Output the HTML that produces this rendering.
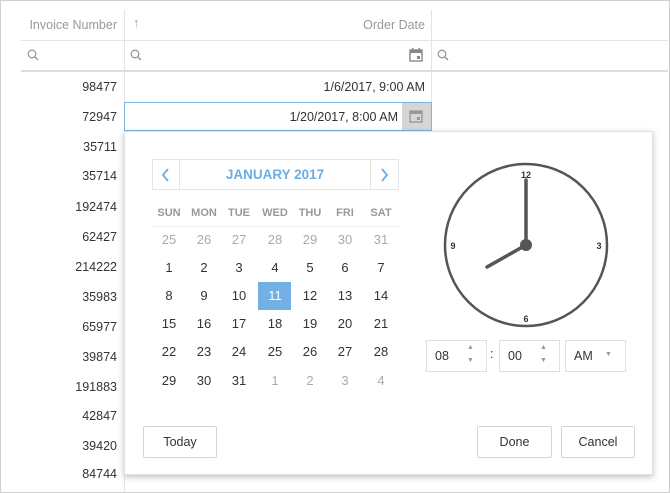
<!DOCTYPE html>
<html><head><style>
*{box-sizing:border-box;margin:0;padding:0}
body{width:670px;height:493px;overflow:hidden;background:#fff;font-family:"Liberation Sans",sans-serif;font-size:12.5px;color:#333;position:relative}
.a{position:absolute}
.frame{left:0;top:0;width:670px;height:493px;border:1px solid #cfcfcf}
.vl{width:1px;background:#e4e4e4}
.hl{height:1px;background:#e4e4e4}
.num{left:21px;width:96px;text-align:right;font-size:12.5px;color:#333}
.hd{color:#999;font-size:12.5px}
.popup{left:124px;top:131px;width:529px;height:344px;background:#fff;box-shadow:0 2px 6px rgba(0,0,0,.25);border:1px solid #e2e2e2}
.d{width:35px;text-align:center;font-size:13px}
.g{color:#aaa}
.btn{border:1px solid #d4d4d4;border-radius:2px;height:32px;line-height:30px;text-align:center;background:#fff;font-size:12.5px;color:#333}
.box{border:1px solid #e0e0e0;height:32px;line-height:30px;padding-left:8px;font-size:12.5px}
</style></head><body>
<div class="a frame"></div>
<div class="a vl" style="left:124px;top:10px;height:482px"></div>
<div class="a vl" style="left:431px;top:10px;height:121px"></div>
<div class="a hl" style="left:21px;top:40px;width:647px"></div>
<div class="a hl" style="left:21px;top:70px;width:647px;background:#ddd;height:2px"></div>
<div class="a hd" style="left:21px;top:18px;width:96px;text-align:right">Invoice Number</div>
<div class="a hd" style="left:133px;top:16px">&#8593;</div>
<div class="a hd" style="left:300px;top:18px;width:125px;text-align:right">Order Date</div>
<svg class="a" style="left:27px;top:49px" width="12" height="12"><circle cx="5" cy="5" r="3.8" fill="none" stroke="#999" stroke-width="1.3"/><line x1="8" y1="8" x2="11" y2="11" stroke="#999" stroke-width="1.5"/></svg>
<svg class="a" style="left:130px;top:49px" width="12" height="12"><circle cx="5" cy="5" r="3.8" fill="none" stroke="#999" stroke-width="1.3"/><line x1="8" y1="8" x2="11" y2="11" stroke="#999" stroke-width="1.5"/></svg>
<svg class="a" style="left:437px;top:49px" width="12" height="12"><circle cx="5" cy="5" r="3.8" fill="none" stroke="#999" stroke-width="1.3"/><line x1="8" y1="8" x2="11" y2="11" stroke="#999" stroke-width="1.5"/></svg>
<svg class="a" style="left:409px;top:48px" width="14" height="14"><rect x="1" y="2" width="12" height="11" fill="none" stroke="#888" stroke-width="1.4"/><rect x="1" y="2" width="12" height="3" fill="#888"/><rect x="3" y="0" width="1.5" height="3" fill="#888"/><rect x="9.5" y="0" width="1.5" height="3" fill="#888"/><rect x="8" y="8" width="3" height="3" fill="#888"/></svg>
<div class="a num" style="top:80px">98477</div>
<div class="a" style="left:300px;top:80px;width:125px;text-align:right">1/6/2017, 9:00 AM</div>
<div class="a" style="left:124px;top:102px;width:308px;height:29px;border:1px solid #7fb5e6"></div>
<div class="a" style="left:402px;top:103px;width:29px;height:27px;background:#d6d6d6"></div>
<svg class="a" style="left:409px;top:109px" width="14" height="14"><rect x="1" y="2" width="12" height="11" fill="none" stroke="#999" stroke-width="1.4"/><rect x="1" y="2" width="12" height="3" fill="#999"/><rect x="8" y="8" width="3" height="3" fill="#999"/></svg>
<div class="a" style="left:260px;top:110px;width:138px;text-align:right">1/20/2017, 8:00 AM</div>
<div class="a num" style="top:110px">72947</div>
<div class="a num" style="top:140px">35711</div>
<div class="a num" style="top:169px">35714</div>
<div class="a num" style="top:200px">192474</div>
<div class="a num" style="top:230px">62427</div>
<div class="a num" style="top:260px">214222</div>
<div class="a num" style="top:290px">35983</div>
<div class="a num" style="top:320px">65977</div>
<div class="a num" style="top:350px">39874</div>
<div class="a num" style="top:380px">191883</div>
<div class="a num" style="top:409px">42847</div>
<div class="a num" style="top:439px">39420</div>
<div class="a num" style="top:467px">84744</div>

<div class="a popup"></div>
<div class="a" style="left:152px;top:159px;width:247px;height:31px;border:1px solid #e4e4e4"></div>
<div class="a vl" style="left:179px;top:159px;height:31px"></div>
<div class="a vl" style="left:370px;top:159px;height:31px"></div>
<svg class="a" style="left:161px;top:168px" width="10" height="14"><path d="M7 1 L2 7 L7 13" fill="none" stroke="#6aaee6" stroke-width="1.8"/></svg>
<svg class="a" style="left:379px;top:168px" width="10" height="14"><path d="M3 1 L8 7 L3 13" fill="none" stroke="#6aaee6" stroke-width="1.8"/></svg>
<div class="a" style="left:180px;top:167px;width:190px;text-align:center;color:#6aaee6;font-weight:bold;font-size:13.5px">JANUARY 2017</div>
<div class="a hl" style="left:152px;top:226px;width:247px;background:#eee"></div>
<div class="a" style="left:258px;top:282px;width:33px;height:28px;background:#72b0e6"></div>
<div id="cal"></div>
<svg class="a" style="left:440px;top:160px" width="172" height="172"><circle cx="86" cy="85" r="81" fill="none" stroke="#555" stroke-width="2.5"/><line x1="86" y1="85" x2="86" y2="20" stroke="#555" stroke-width="3.5" stroke-linecap="round"/><line x1="86" y1="85" x2="47" y2="107" stroke="#555" stroke-width="3.5" stroke-linecap="round"/><circle cx="86" cy="85" r="6" fill="#555"/><text x="86" y="18" font-size="9" font-weight="bold" text-anchor="middle" fill="#333" font-family="Liberation Sans">12</text><text x="159" y="89" font-size="9" font-weight="bold" text-anchor="middle" fill="#333" font-family="Liberation Sans">3</text><text x="86" y="162" font-size="9" font-weight="bold" text-anchor="middle" fill="#333" font-family="Liberation Sans">6</text><text x="13" y="89" font-size="9" font-weight="bold" text-anchor="middle" fill="#333" font-family="Liberation Sans">9</text></svg>
<div class="a box" style="left:426px;top:340px;width:61px">08</div>
<div class="a box" style="left:499px;top:340px;width:61px">00</div>
<div class="a box" style="left:565px;top:340px;width:61px">AM</div>
<div class="a" style="left:490px;top:347px;color:#333">:</div>
<div class="a" style="left:467px;top:344px;font-size:7px;color:#999">&#9650;</div>
<div class="a" style="left:467px;top:357px;font-size:7px;color:#999">&#9660;</div>
<div class="a" style="left:540px;top:344px;font-size:7px;color:#999">&#9650;</div>
<div class="a" style="left:540px;top:357px;font-size:7px;color:#999">&#9660;</div>
<div class="a" style="left:605px;top:351px;font-size:7px;color:#999">&#9660;</div>
<div class="a btn" style="left:143px;top:426px;width:74px">Today</div>
<div class="a btn" style="left:477px;top:426px;width:75px">Done</div>
<div class="a btn" style="left:561px;top:426px;width:74px">Cancel</div>
<script>
var xs=[169,204,239,275,310,345,381],h=["SUN","MON","TUE","WED","THU","FRI","SAT"],s="";
h.forEach(function(t,i){s+='<div class="a d" style="left:'+(xs[i]-17.5)+'px;top:207px;font-size:11px;font-weight:bold;color:#999">'+t+'</div>'});
var days=[25,26,27,28,29,30,31];for(var i=1;i<=31;i++)days.push(i);for(i=1;i<=4;i++)days.push(i);
var ys=[240,268,296,324,352,381];
days.forEach(function(d,k){var r=Math.floor(k/7),c=k%7,g=(r==0||(r==5&&c>2));
s+='<div class="a d'+(g?' g':'')+'" style="left:'+(xs[c]-17.5)+'px;top:'+(ys[r]-8)+'px;'+(d==11&&r==2?'color:#fff':'')+'">'+d+'</div>'});
document.getElementById('cal').innerHTML=s;
</script>
</body></html>
